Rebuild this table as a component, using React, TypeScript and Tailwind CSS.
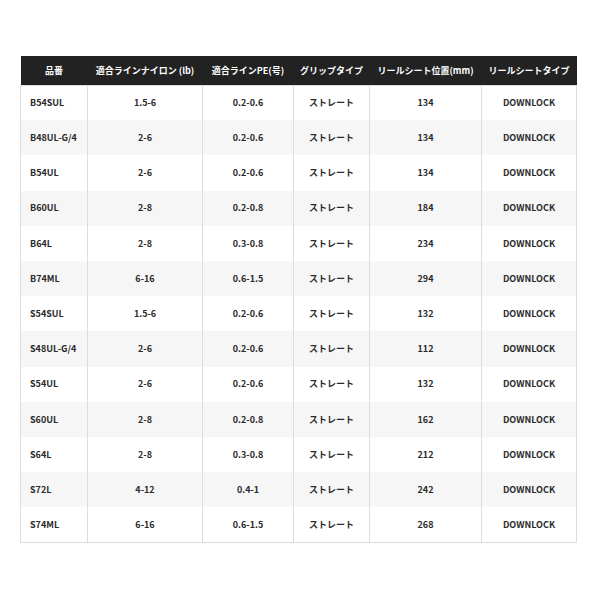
const headers = ["品番", "適合ラインナイロン (lb)", "適合ラインPE(号)", "グリップタイプ", "リールシート位置(mm)", "リールシートタイプ"];
const widths = ["w-[67px]", "w-[115px]", "w-[91px]", "w-[76px]", "w-[112px]", "w-[95px]"];

const rows: string[][] = [
  ["B54SUL", "1.5-6", "0.2-0.6", "ストレート", "134", "DOWNLOCK"],
  ["B48UL-G/4", "2-6", "0.2-0.6", "ストレート", "134", "DOWNLOCK"],
  ["B54UL", "2-6", "0.2-0.6", "ストレート", "134", "DOWNLOCK"],
  ["B60UL", "2-8", "0.2-0.8", "ストレート", "184", "DOWNLOCK"],
  ["B64L", "2-8", "0.3-0.8", "ストレート", "234", "DOWNLOCK"],
  ["B74ML", "6-16", "0.6-1.5", "ストレート", "294", "DOWNLOCK"],
  ["S54SUL", "1.5-6", "0.2-0.6", "ストレート", "132", "DOWNLOCK"],
  ["S48UL-G/4", "2-6", "0.2-0.6", "ストレート", "112", "DOWNLOCK"],
  ["S54UL", "2-6", "0.2-0.6", "ストレート", "132", "DOWNLOCK"],
  ["S60UL", "2-8", "0.2-0.8", "ストレート", "162", "DOWNLOCK"],
  ["S64L", "2-8", "0.3-0.8", "ストレート", "212", "DOWNLOCK"],
  ["S72L", "4-12", "0.4-1", "ストレート", "242", "DOWNLOCK"],
  ["S74ML", "6-16", "0.6-1.5", "ストレート", "268", "DOWNLOCK"],
];

export default function App() {
  return (
    <div
      className="w-[600px] h-[600px] bg-white pt-[56px] pl-[20px]"
      style={{ fontFamily: '"Noto Sans CJK JP", "Noto Sans", sans-serif' }}
    >
      <table className="w-[556px] table-fixed border-collapse text-[9px] font-bold text-[#2a2a2a]">
        <thead>
          <tr className="h-[29px] bg-[#222] text-white">
            {headers.map((h, i) => (
              <th key={h} className={`${widths[i]} p-0 text-center font-bold whitespace-nowrap`}>
                {h}
              </th>
            ))}
          </tr>
        </thead>
        <tbody className="border border-[#ddd]">
          {rows.map((row, idx) => (
            <tr key={row[0]} className={idx % 2 === 0 ? "h-[35.2px] bg-white" : "h-[35.2px] bg-[#f6f6f6]"}>
              {row.map((cell, i) => (
                <td
                  key={i}
                  className={
                    i === 0
                      ? "p-0 pl-[9px] text-left border-r border-[#ddd]"
                      : "p-0 text-center border-r border-[#ddd]"
                  }
                >
                  {cell}
                </td>
              ))}
            </tr>
          ))}
        </tbody>
      </table>
    </div>
  );
}
